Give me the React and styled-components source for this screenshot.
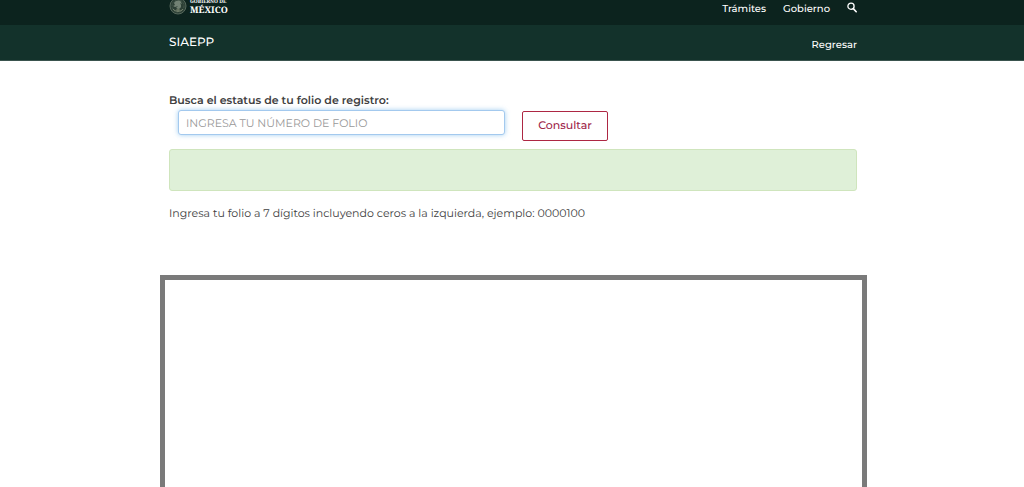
import React from "react";
import styled, { createGlobalStyle } from "styled-components";

const GlobalStyle = createGlobalStyle`
  *, *::before, *::after { box-sizing: border-box; }
  body {
    margin: 0;
    background: #fff;
    color: #404041;
    font-family: Montserrat, Inter, "Liberation Sans", sans-serif;
    font-size: 11px;
    line-height: 16px;
    text-rendering: geometricPrecision;
  }
`;

const Page = styled.div`
  display: flex;
  flex-direction: column;
  height: 100vh;
  overflow: hidden;
`;

const Container = styled.div`
  width: 100%;
  max-width: 706px;
  margin: 0 auto;
  padding: 0 9px;
  display: flex;
  justify-content: space-between;
`;

const TopBar = styled.header`
  height: 25px;
  flex: none;
  overflow: hidden;
  background: #0c231e;
  padding-left: 2px;
`;

const SubBar = styled.div`
  height: 36px;
  flex: none;
  background: #13322b;
  border-bottom: 1px solid #3a544e;
  padding-left: 2px;
`;

const Brand = styled.a`
  display: flex;
  gap: 3px;
  margin-top: -3px;
  color: #fff;
  text-decoration: none;
`;

const Wordmark = styled.span`
  display: flex;
  flex-direction: column;
  padding-top: 2px;
  font-family: "Noto Serif", "DejaVu Serif", "Liberation Serif", serif;
  font-weight: 700;
`;

const WordSmall = styled.span`
  font-size: 5px;
  line-height: 7px;
`;

const WordLarge = styled.span`
  font-size: 9px;
  line-height: 7px;
`;

const Nav = styled.nav`
  display: flex;
  align-items: flex-start;
  gap: 17px;
  padding-top: 1px;
`;

const NavLink = styled.a`
  color: #fff;
  font-size: 10px;
  font-weight: 500;
  line-height: 16px;
  text-decoration: none;
`;

const IconButton = styled.button`
  display: flex;
  padding: 1px 0 0;
  border: 0;
  background: none;
  color: #fff;
`;

const AppName = styled.a`
  padding-top: 9px;
  color: #fff;
  font-size: 12px;
  font-weight: 500;
  line-height: 18px;
  text-decoration: none;
`;

const SubNav = styled(Nav)`
  padding-top: 12px;
`;

const Main = styled.main`
  flex: 1;
  display: flex;
  flex-direction: column;
  width: 100%;
  padding: 31px 0 0 2px;
`;

const Column = styled.div`
  width: 100%;
  max-width: 706px;
  margin: 0 auto;
  padding: 0 9px;
`;

const Label = styled.label`
  display: block;
  font-weight: 600;
`;

const SearchRow = styled.form`
  display: flex;
  align-items: flex-start;
  gap: 17px;
  margin-top: 2px;
  padding-left: 9px;
`;

const FolioInput = styled.input`
  width: 327px;
  height: 25px;
  padding: 0 7px;
  border: 1px solid #a3c9ee;
  border-radius: 3px;
  outline: none;
  box-shadow: 0 0 5px rgba(102, 175, 233, 0.6);
  color: #545454;
  font: inherit;
  text-rendering: inherit;

  &::placeholder { color: #999; opacity: 1; }
`;

const OutlineButton = styled.button`
  width: 86px;
  height: 30px;
  margin-top: 1px;
  padding: 0 0 2px;
  border: 1px solid #ad2743;
  border-radius: 2px;
  background: #fff;
  color: #9d2449;
  font: inherit;
  font-weight: 500;
  text-rendering: inherit;
`;

const Alert = styled.div`
  height: 42px;
  margin-top: 8px;
  border: 1px solid #cfe5bd;
  border-radius: 3px;
  background: #dff0d8;
`;

const Hint = styled.p`
  margin: 14px 0 0;
`;

const Results = styled.section`
  flex: 1;
  width: 100%;
  max-width: 707px;
  margin: 54px auto 0;
  border: 5px solid #7a7a7a;
  border-bottom: 0;
`;

function Seal() {
  return (
    <svg width="18" height="18" viewBox="0 0 18 18" fill="none" aria-hidden="true">
      <circle cx="9" cy="9" r="8" fill="#2c3f35" stroke="#56685c" strokeWidth="1" />
      <circle cx="9" cy="9" r="6" stroke="#43574b" strokeWidth="1" strokeDasharray="2 1" />
      <path d="M5 6c2-3 6-3 7-1l1 2-2-1c2 3 1 5-1 6l-3-1 2-2-3 1-2-1 2-1z" fill="#728274" />
      <path d="M4 12c2 3 8 3 10 0M7 13h4M9 11v4" stroke="#76836f" strokeWidth="1" />
    </svg>
  );
}

function SearchIcon() {
  return (
    <svg width="10" height="11" viewBox="0 0 10 11" fill="none" stroke="currentColor" aria-hidden="true">
      <circle cx="4" cy="4.2" r="3.1" strokeWidth="1.3" />
      <path d="M6.3 6.6 9.2 9.7" strokeWidth="1.6" strokeLinecap="round" />
    </svg>
  );
}

export default function App() {
  return (
    <Page>
      <GlobalStyle />
      <TopBar>
        <Container>
          <Brand href="#inicio">
            <Seal />
            <Wordmark>
              <WordSmall>GOBIERNO DE</WordSmall>
              <WordLarge>MÉXICO</WordLarge>
            </Wordmark>
          </Brand>
          <Nav>
            <NavLink href="#tramites">Trámites</NavLink>
            <NavLink href="#gobierno">Gobierno</NavLink>
            <IconButton type="button" aria-label="Buscar">
              <SearchIcon />
            </IconButton>
          </Nav>
        </Container>
      </TopBar>
      <SubBar>
        <Container>
          <AppName href="#siaepp">SIAEPP</AppName>
          <SubNav>
            <NavLink href="#regresar">Regresar</NavLink>
          </SubNav>
        </Container>
      </SubBar>
      <Main>
        <Column>
          <Label htmlFor="folio">Busca el estatus de tu folio de registro:</Label>
          <SearchRow onSubmit={(e) => e.preventDefault()}>
            <FolioInput id="folio" type="text" placeholder="INGRESA TU NÚMERO DE FOLIO" />
            <OutlineButton type="submit">Consultar</OutlineButton>
          </SearchRow>
          <Alert role="status" />
          <Hint>Ingresa tu folio a 7 dígitos incluyendo ceros a la izquierda, ejemplo: 0000100</Hint>
        </Column>
        <Results />
      </Main>
    </Page>
  );
}
